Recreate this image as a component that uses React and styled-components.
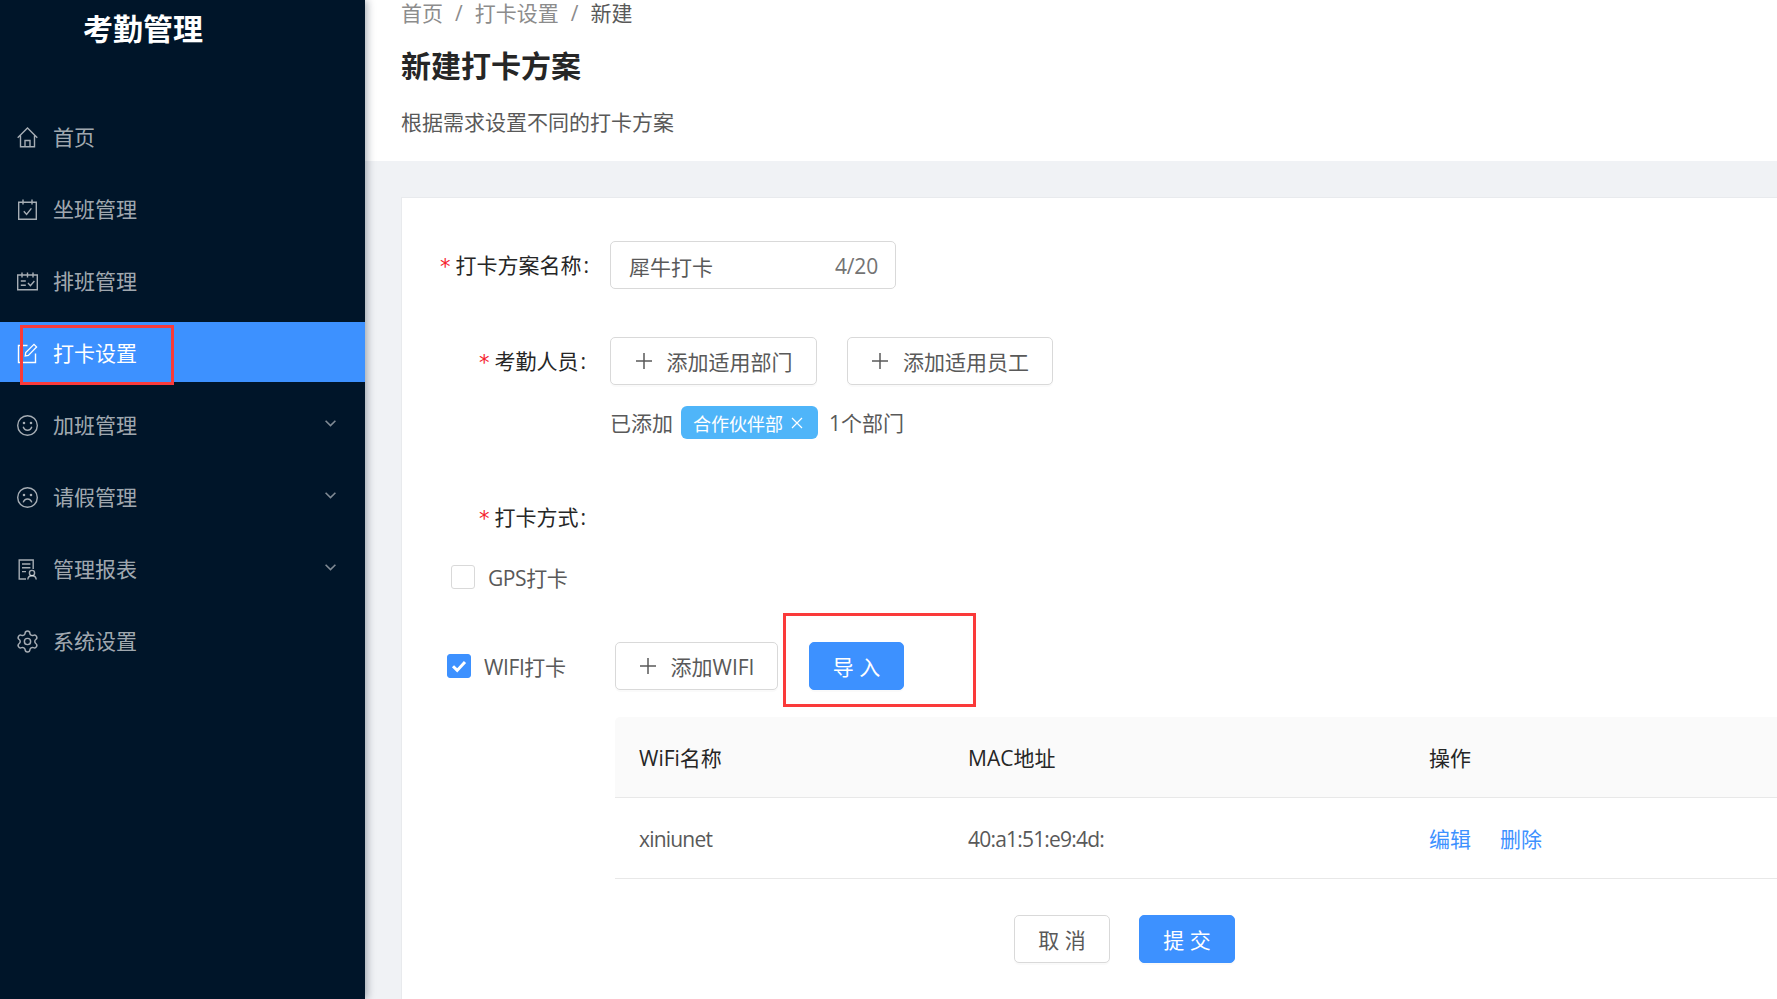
import React from 'react';
import styled, { createGlobalStyle } from 'styled-components';
import { Settings } from 'lucide-react';

const Global = createGlobalStyle`
  html, body { margin: 0; padding: 0; height: 100%; overflow: hidden; background: #fff; }
  body, button, input, table { font-family: "Open Sans", "Noto Sans CJK SC", sans-serif; }
  * { box-sizing: border-box; }
`;

const Shell = styled.div`
  display: flex;
  width: 100vw;
  height: 100vh;
  overflow: hidden;
`;

const Sidebar = styled.aside`
  position: relative;
  z-index: 2;
  flex: 0 0 365px;
  background: #001529;
  box-shadow: 2px 0 8px rgba(0, 21, 41, 0.35);
`;

const Logo = styled.div`
  height: 106px;
  padding: 8px 0 0 83px;
  color: #fff;
  font-size: 30px;
  font-weight: 700;
  line-height: 42px;
`;

const NavList = styled.nav`
  display: flex;
  flex-direction: column;
  gap: 12px;
`;

const NavItem = styled.div`
  position: relative;
  display: flex;
  align-items: center;
  gap: 15px;
  height: 60px;
  padding: 0 29px 0 17px;
  color: ${p => (p.$active ? '#fff' : 'rgba(255,255,255,0.65)')};
  background: ${p => (p.$active ? '#3d91ff' : 'transparent')};
  font-size: 21px;
`;

const NavSvg = styled.svg`
  flex: 0 0 21px;
  width: 21px;
  height: 21px;
  margin-top: 2px;
  fill: none;
  stroke: currentColor;
  stroke-width: 1.4;
`;

const GearSvg = styled(Settings)`
  flex: 0 0 25px;
  width: 25px;
  height: 25px;
  margin: 2px -2px 0;
  color: inherit;
`;

const Chevron = styled.svg`
  width: 11px;
  height: 7px;
  margin: -2px 0 0 auto;
  fill: none;
  stroke: rgba(255, 255, 255, 0.5);
  stroke-width: 1.6;
`;

const RedBox = styled.div`
  position: absolute;
  left: ${p => p.$left}px;
  top: ${p => p.$top}px;
  width: ${p => p.$w}px;
  height: ${p => p.$h}px;
  border: 3px solid #fa3a3a;
  pointer-events: none;
`;

const Main = styled.main`
  flex: 1;
  min-width: 0;
  display: flex;
  flex-direction: column;
`;

const Header = styled.header`
  flex: 0 0 161px;
  padding-left: 36px;
  background: #fff;
`;

const Crumbs = styled.div`
  display: flex;
  align-items: center;
  height: 26px;
  font-size: 21px;
  line-height: 26px;
  color: #8c8c8c;
`;

const CrumbSep = styled.span`
  margin: 0 12px;
`;

const CrumbLast = styled.span`
  color: #595959;
`;

const Title = styled.h1`
  margin: 19px 0 0;
  font-size: 30px;
  line-height: 42px;
  font-weight: 700;
  color: #262626;
`;

const Desc = styled.p`
  margin: 20px 0 0;
  font-size: 21px;
  line-height: 30px;
  color: #595959;
`;

const Content = styled.div`
  flex: 1;
  padding: 36px 0 0 36px;
  background: #f0f2f5;
`;

const Card = styled.section`
  height: 100%;
  padding-top: 43px;
  background: #fff;
  border-top: 1px solid #e8eaed;
  border-left: 1px solid #e8eaed;
  font-size: 21px;
  color: #595959;
`;

const FormRow = styled.div`
  display: flex;
  margin-top: ${p => p.$mt || 0}px;
`;

const Label = styled.label`
  flex: 0 0 208px;
  display: flex;
  align-items: center;
  justify-content: flex-end;
  padding-right: ${p => p.$pr || 21}px;
  height: ${p => p.$h || 48}px;
  color: #262626;
  line-height: 30px;
`;

const Req = styled.span`
  margin-right: 5px;
  color: #f5222d;
  font-family: "DejaVu Sans", sans-serif;
  font-size: 21px;
  line-height: 1;
  transform: translateY(2px);
`;

const Colon = styled.span`
  margin-left: 2px;
`;

const InputBox = styled.div`
  display: flex;
  align-items: center;
  justify-content: space-between;
  width: 286px;
  height: 48px;
  padding: 1px 17px 0 18px;
  border: 1px solid #d9d9d9;
  border-radius: 5px;
  background: #fff;
`;

const Count = styled.span`
  color: #737373;
  letter-spacing: -0.2px;
`;

const Btn = styled.button`
  display: inline-flex;
  align-items: center;
  justify-content: center;
  height: 48px;
  width: ${p => p.$w}px;
  padding: 0;
  border: 1px solid ${p => (p.$primary ? '#3d91ff' : '#d9d9d9')};
  border-radius: 5px;
  background: ${p => (p.$primary ? '#3d91ff' : '#fff')};
  color: ${p => (p.$primary ? '#fff' : '#595959')};
  font-size: 21px;
  box-shadow: 0 2px 0 rgba(0, 0, 0, 0.02);
`;

const PlusSvg = styled.svg`
  width: 18px;
  height: 18px;
  margin-right: 14px;
  fill: none;
  stroke: #595959;
  stroke-width: 1.5;
`;

const BtnGroup = styled.div`
  display: flex;
  gap: ${p => p.$gap}px;
`;

const AddedLine = styled.div`
  display: flex;
  align-items: center;
  height: 33px;
  margin: 21px 0 0 208px;
  gap: 8px;
`;

const AddedText = styled.span`
  margin-bottom: 2px;
`;

const Tag = styled.span`
  display: inline-flex;
  align-items: center;
  gap: 8px;
  height: 33px;
  padding: 0 15px 0 12px;
  border-radius: 6px;
  background: #4fb5f9;
  color: #fff;
  font-size: 18px;
`;

const TagClose = styled.svg`
  width: 12px;
  height: 12px;
  fill: none;
  stroke: #fff;
  stroke-width: 1.2;
`;

const AddedCount = styled(AddedText)`
  margin-left: 3px;
`;

const CheckRow = styled.div`
  display: flex;
  align-items: center;
  gap: 13px;
  height: 24px;
  margin-top: 33px;
  padding-left: 49px;
`;

const Box = styled.span`
  display: inline-flex;
  align-items: center;
  justify-content: center;
  flex: 0 0 24px;
  width: 24px;
  height: 24px;
  border: 1px solid ${p => (p.$on ? '#3d91ff' : '#d9d9d9')};
  border-radius: 3px;
  background: ${p => (p.$on ? '#3d91ff' : '#fff')};
`;

const Tick = styled.svg`
  width: 16px;
  height: 14px;
  fill: none;
  stroke: #fff;
  stroke-width: 3;
`;

const CheckText = styled.span`
  letter-spacing: -0.4px;
`;

const WifiRow = styled.div`
  display: flex;
  align-items: center;
  height: 48px;
  margin-top: 53px;
`;

const WifiCheck = styled.div`
  flex: 0 0 213px;
  display: flex;
  align-items: center;
  gap: 13px;
  padding-left: 45px;
`;

const ImportWrap = styled.div`
  position: relative;
  margin-left: 31px;
`;

const Table = styled.table`
  display: table;
  width: calc(100% - 213px);
  margin: 27px 0 0 213px;
  border-collapse: separate;
  border-spacing: 0;
  table-layout: fixed;
  font-size: 21px;
  th, td {
    padding: 0 0 0 24px;
    text-align: left;
    border-bottom: 1px solid #e8e8e8;
  }
  th {
    height: 81px;
    font-weight: 400;
    color: #262626;
    background: #fafafa;
  }
  td {
    height: 81px;
    color: #595959;
  }
  th:first-child { width: 329px; border-top-left-radius: 5px; }
  th:nth-child(2) { width: 461px; }
`;

const DataText = styled.span`
  display: inline-block;
  padding-top: 2px;
  letter-spacing: -0.8px;
`;

const Link = styled.a`
  color: #3d91ff;
  margin-right: 29px;
`;

const Footer = styled.div`
  display: flex;
  gap: 29px;
  margin-top: 36px;
  padding-left: 612px;
`;

const HomeIcon = () => (
  <NavSvg viewBox="0 0 21 21">
    <path d="M0.7 10.8 10.5 1l9.8 9.8M3.5 8.5v11.3h14V8.5M8 19.8v-6.3h5v6.3" />
  </NavSvg>
);
const CalCheckIcon = () => (
  <NavSvg viewBox="0 0 21 21">
    <path d="M1.7 3.2h17.6v17H1.7zM6 0.5v5M15 0.5v5M6.8 12.2l2.8 3.2 4.8-6" />
  </NavSvg>
);
const ScheduleIcon = () => (
  <NavSvg viewBox="0 0 21 21">
    <path d="M0.7 4h19.6v14.7H0.7zM5 1.5v5M10.5 1.5v5M16 1.5v5M3.8 10h5M3.8 14.3h5M11 12l2.4 2.6 4-4.6" />
  </NavSvg>
);
const EditIcon = () => (
  <NavSvg viewBox="0 0 21 21">
    <path d="M10.5 2.5h-9v17h17v-9" />
    <path d="M8.2 13l.5-3.4L17 1.4l2.6 2.6-8.2 8.4z" strokeWidth="1.3" />
  </NavSvg>
);
const SmileIcon = () => (
  <NavSvg viewBox="0 0 21 21">
    <circle cx="10.5" cy="10.5" r="9.8" />
    <circle cx="7" cy="8" r=".6" />
    <circle cx="14" cy="8" r=".6" />
    <path d="M6.2 11.8c.8 2.4 2.4 3.4 4.3 3.4s3.5-1 4.3-3.4" />
  </NavSvg>
);
const FrownIcon = () => (
  <NavSvg viewBox="0 0 21 21">
    <circle cx="10.5" cy="10.5" r="9.8" />
    <circle cx="7" cy="8" r=".6" />
    <circle cx="14" cy="8" r=".6" />
    <path d="M6.2 15.4c.8-2.4 2.4-3.4 4.3-3.4s3.5 1 4.3 3.4" />
  </NavSvg>
);
const ReportIcon = () => (
  <NavSvg viewBox="0 0 21 21">
    <path d="M9 20H2.2V1h14v9M5 5h8.4M5 8.8h8.4M5 12.6h4" />
    <circle cx="15" cy="14" r="2.6" />
    <path d="M10.8 20.5c.2-2.6 1.8-3.8 4.2-3.8s4 1.2 4.2 3.8" />
  </NavSvg>
);
const GearIcon = () => <GearSvg strokeWidth={1.4} />;

const menu = [
  { label: '首页', Icon: HomeIcon },
  { label: '坐班管理', Icon: CalCheckIcon },
  { label: '排班管理', Icon: ScheduleIcon },
  { label: '打卡设置', Icon: EditIcon, active: true },
  { label: '加班管理', Icon: SmileIcon, more: true },
  { label: '请假管理', Icon: FrownIcon, more: true },
  { label: '管理报表', Icon: ReportIcon, more: true },
  { label: '系统设置', Icon: GearIcon },
];

const Plus = () => (
  <PlusSvg viewBox="0 0 18 18">
    <path d="M9 1v16M1 9h16" />
  </PlusSvg>
);

export default function App() {
  return (
    <Shell>
      <Global />
      <Sidebar>
        <Logo>考勤管理</Logo>
        <NavList>
          {menu.map(({ label, Icon, active, more }) => (
            <NavItem key={label} $active={active}>
              <Icon />
              <span>{label}</span>
              {more && (
                <Chevron viewBox="0 0 11 7">
                  <path d="M0.6 0.8 5.5 5.6l4.9-4.8" />
                </Chevron>
              )}
              {active && <RedBox $left={20} $top={3} $w={154} $h={60} />}
            </NavItem>
          ))}
        </NavList>
      </Sidebar>
      <Main>
        <Header>
          <Crumbs>
            <span>首页</span>
            <CrumbSep>/</CrumbSep>
            <span>打卡设置</span>
            <CrumbSep>/</CrumbSep>
            <CrumbLast>新建</CrumbLast>
          </Crumbs>
          <Title>新建打卡方案</Title>
          <Desc>根据需求设置不同的打卡方案</Desc>
        </Header>
        <Content>
          <Card>
            <FormRow>
              <Label><Req>*</Req>打卡方案名称<Colon>:</Colon></Label>
              <InputBox>
                <span>犀牛打卡</span>
                <Count>4/20</Count>
              </InputBox>
            </FormRow>
            <FormRow $mt={48}>
              <Label $pr={24}><Req>*</Req>考勤人员<Colon>:</Colon></Label>
              <BtnGroup $gap={30}>
                <Btn $w={207}><Plus />添加适用部门</Btn>
                <Btn $w={206}><Plus />添加适用员工</Btn>
              </BtnGroup>
            </FormRow>
            <AddedLine>
              <AddedText>已添加</AddedText>
              <Tag>
                合作伙伴部
                <TagClose viewBox="0 0 12 12"><path d="M1 1l10 10M11 1 1 11" /></TagClose>
              </Tag>
              <AddedCount>1个部门</AddedCount>
            </AddedLine>
            <FormRow $mt={63}>
              <Label $h={30} $pr={24}><Req>*</Req>打卡方式<Colon>:</Colon></Label>
            </FormRow>
            <CheckRow>
              <Box />
              <CheckText>GPS打卡</CheckText>
            </CheckRow>
            <WifiRow>
              <WifiCheck>
                <Box $on>
                  <Tick viewBox="0 0 16 14"><path d="M2 7.2l4.2 4.2L14 3" /></Tick>
                </Box>
                <CheckText>WIFI打卡</CheckText>
              </WifiCheck>
              <Btn $w={163}><Plus />添加WIFI</Btn>
              <ImportWrap>
                <Btn $w={95} $primary>导 入</Btn>
                <RedBox $left={-26} $top={-29} $w={193} $h={94} />
              </ImportWrap>
            </WifiRow>
            <Table>
              <thead>
                <tr>
                  <th>WiFi名称</th>
                  <th>MAC地址</th>
                  <th>操作</th>
                </tr>
              </thead>
              <tbody>
                <tr>
                  <td><DataText>xiniunet</DataText></td>
                  <td><DataText>40:a1:51:e9:4d:</DataText></td>
                  <td><Link>编辑</Link><Link>删除</Link></td>
                </tr>
              </tbody>
            </Table>
            <Footer>
              <Btn $w={96}>取 消</Btn>
              <Btn $w={96} $primary>提 交</Btn>
            </Footer>
          </Card>
        </Content>
      </Main>
    </Shell>
  );
}
